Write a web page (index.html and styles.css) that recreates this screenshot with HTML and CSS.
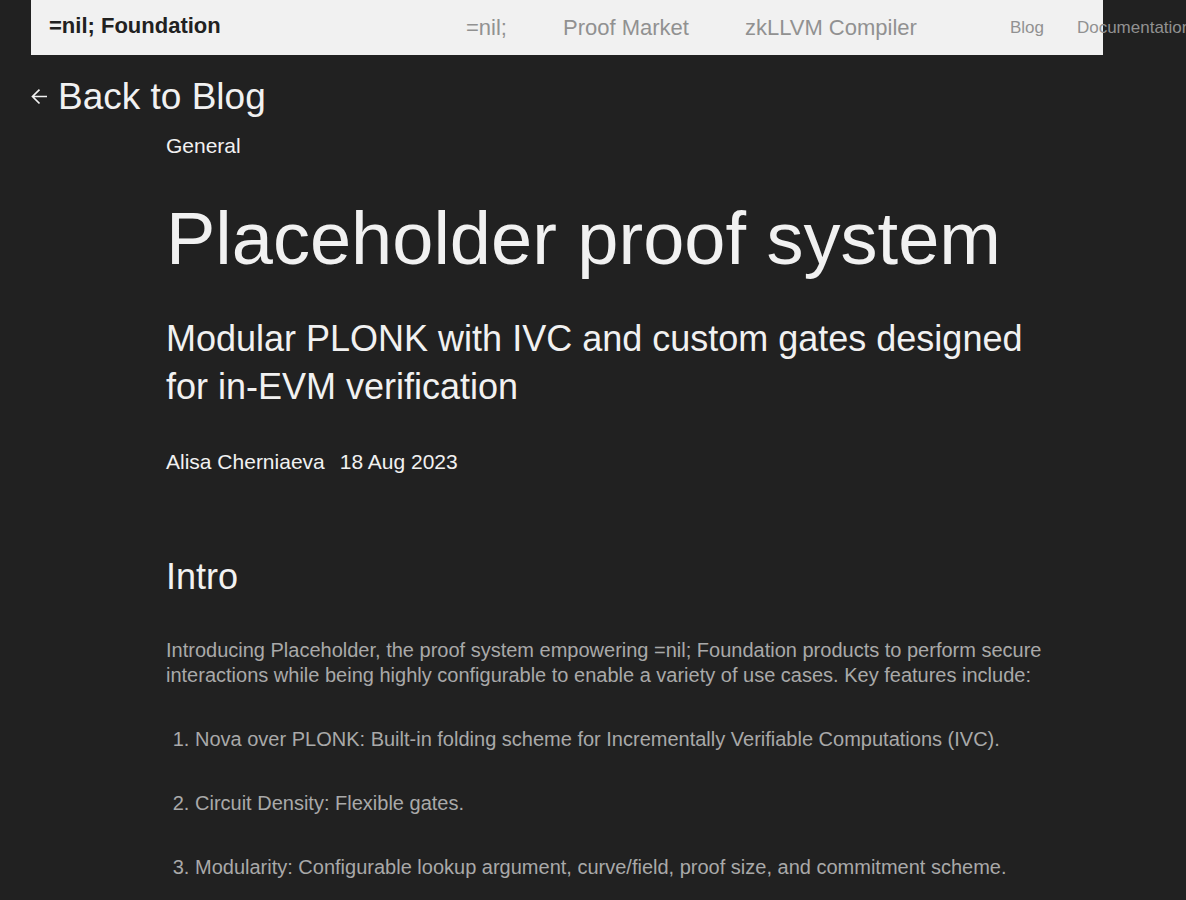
FILE: index.html
```html
<!DOCTYPE html>
<html lang="en">
<head>
<meta charset="utf-8">
<meta name="viewport" content="width=device-width, initial-scale=1">
<title>Placeholder proof system</title>
<link rel="stylesheet" href="styles.css">
</head>
<body>
<header class="header">
  <a class="logo" href="#">=nil; Foundation</a>
  <nav class="nav" aria-label="Main">
    <div class="products">
      <a href="#">=nil;</a>
      <a href="#">Proof Market</a>
      <a href="#">zkLLVM Compiler</a>
    </div>
    <div class="resources">
      <a href="#">Blog</a>
      <a href="#">Documentation</a>
    </div>
  </nav>
</header>
<main class="main">
  <a class="back" href="#">
    <svg class="back-icon" viewBox="0 0 16 16" aria-hidden="true"><path d="M16 7.500H1.500M8.500 .7L1.500 7.500l7 7"/></svg>
    <span>Back to Blog</span>
  </a>
  <article class="article">
    <p class="category">General</p>
    <h1 class="title">Placeholder proof system</h1>
    <p class="subtitle">Modular PLONK with IVC and custom gates designed for in-EVM verification</p>
    <div class="meta"><span>Alisa Cherniaeva</span><time datetime="2023-08-18">18 Aug 2023</time></div>
    <h2 class="section-title">Intro</h2>
    <p class="text">Introducing Placeholder, the proof system empowering =nil; Foundation products to perform secure interactions while being highly configurable to enable a variety of use cases. Key features include:</p>
    <ol class="features">
      <li>Nova over PLONK: Built-in folding scheme for Incrementally Verifiable Computations (IVC).</li>
      <li>Circuit Density: Flexible gates.</li>
      <li>Modularity: Configurable lookup argument, curve/field, proof size, and commitment scheme.</li>
    </ol>
  </article>
</main>
</body>
</html>
```
FILE: styles.css
```css
* { box-sizing: border-box; }
body {
  margin: 0;
  overflow-x: hidden;
  background: #212121;
  color: #f1f1f1;
  font-family: "Liberation Sans", Arial, sans-serif;
  font-size: 21px;
  line-height: 25px;
}
a { color: inherit; text-decoration: none; }
h1, h2, p, ol { margin: 0; font-weight: 400; }
.header {
  display: flex;
  align-items: center;
  height: 55px;
  margin: 0 83px 0 31px;
  padding-left: 18px;
  background: #f1f1f1;
  color: #919191;
  white-space: nowrap;
}
.logo {
  flex: 0 0 417px;
  padding-bottom: 4px;
  color: #212121;
  font-size: 22px;
  font-weight: 700;
}
.nav { display: flex; align-items: center; gap: 93px; }
.products { display: flex; gap: 56px; font-size: 22px; }
.resources { display: flex; gap: 33px; font-size: 17px; }
.main { padding: 18px 31px 0; }
.back {
  display: flex;
  align-items: center;
  gap: 11px;
  width: fit-content;
  font-size: 37px;
  line-height: 48px;
}
.back-icon {
  width: 16px;
  height: 16px;
  fill: none;
  stroke: currentColor;
  stroke-width: 1.700;
}
.article { padding: 12px 96px 0 135px; }
.title { margin-top: 36px; font-size: 74px; line-height: 90px; }
.subtitle { margin-top: 31px; font-size: 36px; line-height: 48px; }
.meta { display: flex; gap: 15px; margin-top: 38px; }
.section-title { margin-top: 79px; font-size: 36px; line-height: 48px; }
.text { margin-top: 37px; color: #a9a9a9; font-size: 20px; }
.features {
  display: grid;
  gap: 39px;
  margin-top: 39px;
  padding: 0 0 32px 29px;
  color: #a9a9a9;
  font-size: 20px;
}
```
